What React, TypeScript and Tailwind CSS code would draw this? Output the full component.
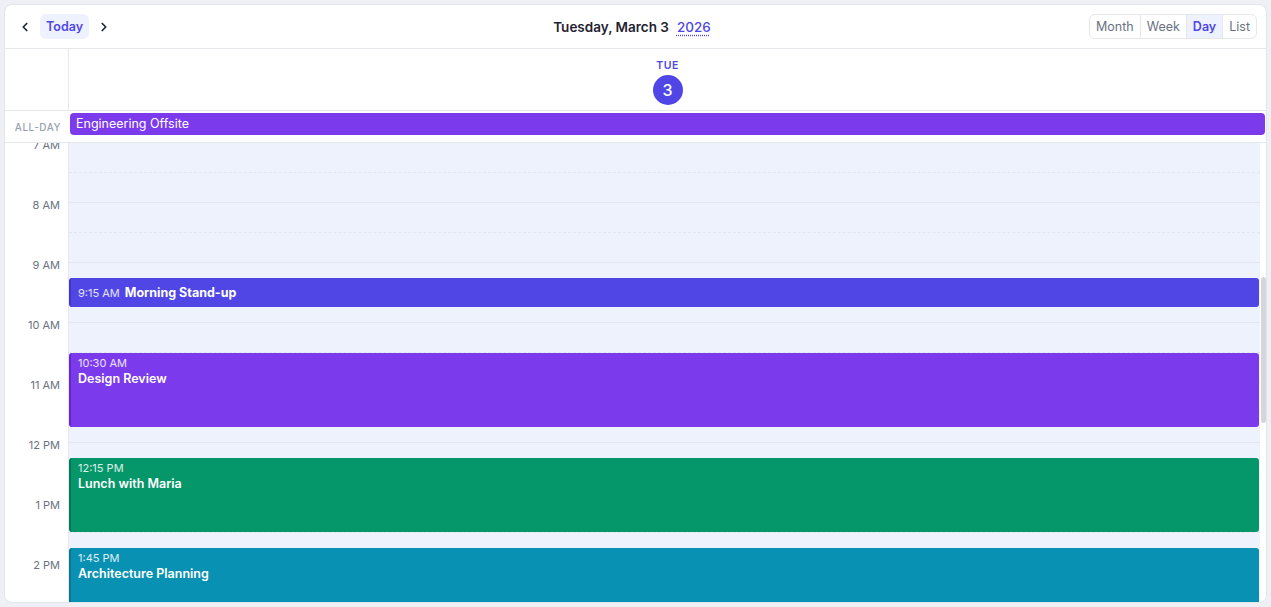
import { ChevronLeft, ChevronRight } from "lucide-react";

const hours = ["7 AM", "8 AM", "9 AM", "10 AM", "11 AM", "12 PM", "1 PM", "2 PM"];

const events = [
  { start: 135, dur: 30, time: "9:15 AM", title: "Morning Stand-up", inline: true, bg: "bg-[#4f46e5]", edge: "border-[#3f37c9]" },
  { start: 210, dur: 75, time: "10:30 AM", title: "Design Review", inline: false, bg: "bg-[#7c3aed]", edge: "border-[#6526d1]" },
  { start: 315, dur: 75, time: "12:15 PM", title: "Lunch with Maria", inline: false, bg: "bg-[#059669]", edge: "border-[#047857]" },
  { start: 405, dur: 75, time: "1:45 PM", title: "Architecture Planning", inline: false, bg: "bg-[#0891b2]", edge: "border-[#0e7490]" },
];

const views = ["Month", "Week", "Day", "List"];

export default function App() {
  return (
    <div className="h-screen bg-[#eef0f5] p-1 font-['Inter',sans-serif] text-gray-900">
      <div className="flex h-full flex-col overflow-hidden rounded-lg border border-[#e2e5eb] bg-white">
        {/* Toolbar */}
        <div className="flex h-[44px] shrink-0 items-center border-b border-[#e5e7eb] pl-3 pr-[9px]">
          <div className="flex flex-1 items-center gap-[7px]">
            <button type="button" className="flex h-6 w-4 items-center justify-center text-gray-800">
              <ChevronLeft className="h-3.5 w-3.5" strokeWidth={3} />
            </button>
            <button
              type="button"
              className="h-[25px] rounded-md bg-[#eef2ff] px-[6px] pt-[1px] text-[12.5px] font-semibold text-[#4f46e5]"
            >
              Today
            </button>
            <button type="button" className="flex h-6 w-4 items-center justify-center text-gray-800">
              <ChevronRight className="h-3.5 w-3.5" strokeWidth={3} />
            </button>
          </div>
          <div className="flex items-center gap-[8px] pr-[10px] pt-[1px] text-[13.5px] font-semibold text-[#1f2230]">
            <span>Tuesday, March 3</span>
            <span className="font-medium text-[#4f46e5] underline decoration-dotted underline-offset-[3px]">2026</span>
          </div>
          <div className="flex flex-1 justify-end">
            <div className="flex h-[25px] overflow-hidden rounded-md border border-[#e5e7eb]">
              {views.map((v, i) => (
                <button
                  key={v}
                  type="button"
                  className={
                    (i > 0 ? "border-l border-[#e5e7eb] " : "") +
                    (v === "Day"
                      ? "bg-[#eef2ff] px-[6px] pt-[1px] text-[12.5px] font-semibold text-[#4f46e5]"
                      : "px-[6px] pt-[1px] text-[12.5px] text-gray-500")
                  }
                >
                  {v}
                </button>
              ))}
            </div>
          </div>
        </div>

        {/* Day header */}
        <div className="flex h-[62px] shrink-0 border-b border-[#e5e7eb]">
          <div className="w-[64px] shrink-0 border-r border-[#e5e7eb]" />
          <div className="flex flex-1 flex-col items-center pt-[9px]">
            <span className="text-[10.5px] font-semibold tracking-wider text-[#4f46e5]">TUE</span>
            <span className="mt-[1px] flex h-[30px] w-[30px] items-center justify-center rounded-full bg-[#4f46e5] text-[16px] font-medium text-white">
              3
            </span>
          </div>
        </div>

        {/* All-day */}
        <div className="flex h-[32px] shrink-0 border-b border-[#e5e7eb]">
          <div className="flex w-[64px] shrink-0 items-center justify-end pr-[8px] pt-[2px] text-[10px] font-medium tracking-wider text-gray-400">
            ALL-DAY
          </div>
          <div className="flex flex-1 px-[1px] pt-[2px]">
            <div className="flex h-[22px] flex-1 items-center rounded-[4px] bg-[#7c3aed] px-[6px] pt-[1px] text-[12.5px] text-white">
              Engineering Offsite
            </div>
          </div>
        </div>

        {/* Time grid */}
        <div className="flex min-h-0 flex-1 overflow-hidden">
          <div className="w-[64px] shrink-0 border-r border-[#e5e7eb]">
            {hours.map((h) => (
              <div key={h} className="h-[60px] pr-[8px] text-right text-[11px] leading-[14px] text-gray-500">
                <span className="block -translate-y-[5px]">{h}</span>
              </div>
            ))}
          </div>
          <div className="relative flex-1 bg-[#eef2fd]">
            {hours.map((h) => (
              <div key={h}>
                <div className="h-[30px] border-b border-dashed border-[#e3e6ef]" />
                <div className="h-[30px] border-b border-[#e3e6ee]" />
              </div>
            ))}
            {events.map((e) => (
              <div
                key={e.title}
                className={`absolute left-0 right-[1px] overflow-hidden rounded-[3px] border-l-2 text-white ${e.bg} ${e.edge}`}
                style={{ top: e.start, height: e.dur - 1 }}
              >
                {e.inline ? (
                  <div className="flex h-full items-center gap-[5px] px-[7px] pt-[1px]">
                    <span className="text-[11px] text-white/85">{e.time}</span>
                    <span className="text-[12.5px] font-bold">{e.title}</span>
                  </div>
                ) : (
                  <div className="px-[7px] pt-[3px] leading-[15px]">
                    <div className="text-[11px] text-white/85">{e.time}</div>
                    <div className="text-[12.5px] font-semibold">{e.title}</div>
                  </div>
                )}
              </div>
            ))}
          </div>
          <div className="w-[6px] shrink-0 bg-white">
            <div className="ml-[1px] mt-[134px] h-[146px] w-[5px] rounded-full bg-[#d4d6db]" />
          </div>
        </div>
      </div>
    </div>
  );
}
